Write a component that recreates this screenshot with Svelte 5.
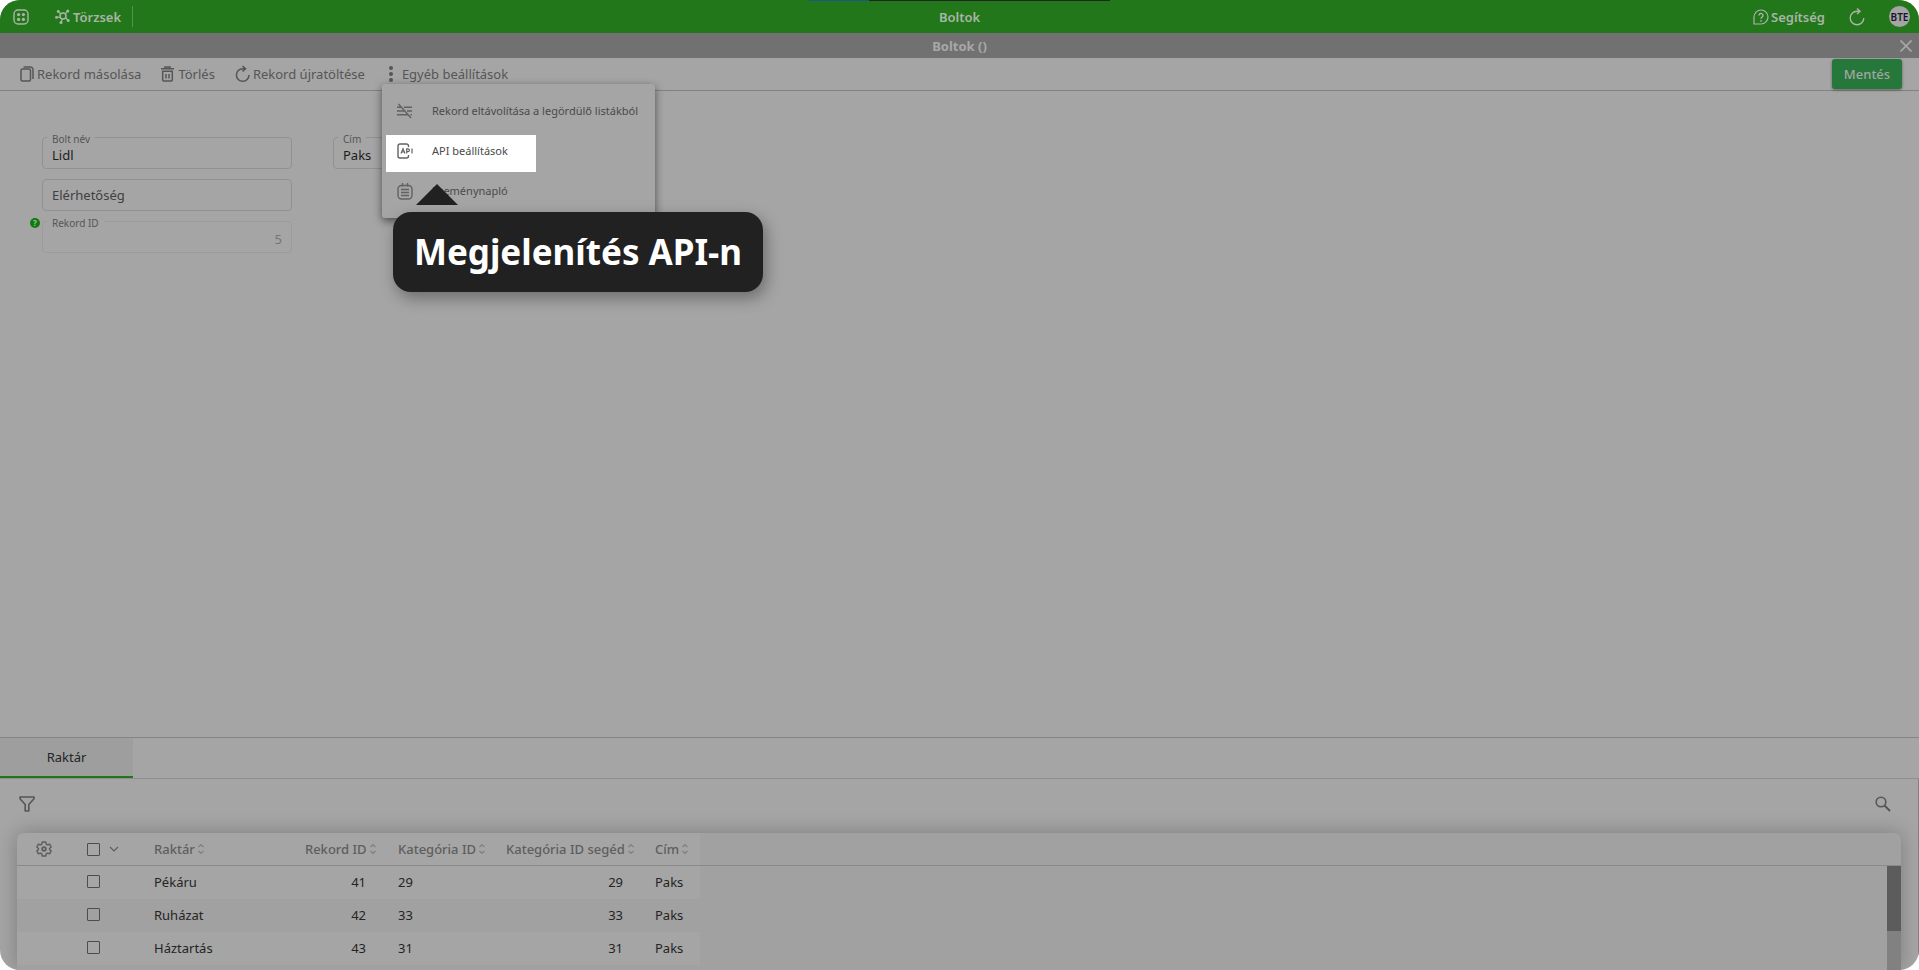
<script lang="ts">
  interface Row {
    name: string;
    id: number;
    category: number;
    helper: number;
    city: string;
  }

  const rows: Row[] = [
    { name: 'Pékáru', id: 41, category: 29, helper: 29, city: 'Paks' },
    { name: 'Ruházat', id: 42, category: 33, helper: 33, city: 'Paks' },
    { name: 'Háztartás', id: 43, category: 31, helper: 31, city: 'Paks' },
  ];

  const columns = [
    { label: 'Raktár', numeric: false },
    { label: 'Rekord ID', numeric: true },
    { label: 'Kategória ID', numeric: false },
    { label: 'Kategória ID segéd', numeric: true },
    { label: 'Cím', numeric: false },
  ];

  let shopName = $state('Lidl');
  let contact = $state('');
  let recordId = $state('5');
  let city = $state('Paks');
</script>

<div class="app">
  <header class="topbar">
    <span class="progress"></span>
    <div class="top-left">
      <button class="icon-btn" aria-label="Menü">
        <svg width="16" height="16" viewBox="0 0 16 16" fill="none" stroke="currentColor">
          <rect x="1" y="1" width="14" height="14" rx="4" stroke-width="1.4" />
          <g fill="currentColor" stroke="none">
            <circle cx="5.6" cy="5.6" r="1.6" /><circle cx="10.4" cy="5.6" r="1.6" />
            <circle cx="5.6" cy="10.4" r="1.6" /><circle cx="10.4" cy="10.4" r="1.6" />
          </g>
        </svg>
      </button>
      <button class="top-btn module">
        <svg width="15" height="15" viewBox="0 0 15 15" fill="none" stroke="currentColor" stroke-width="1.2">
          <circle cx="8" cy="7" r="3" stroke-width="1.5" />
          <path d="M5.8 4.8 3.4 2.6M10.2 4.8l2.4-2.6M5.2 8.1 1.5 8.4M7.2 10l-1 3.4M10.4 8.8l2.6 2.4" />
          <g fill="currentColor" stroke="none">
            <circle cx="3.2" cy="2.4" r="1.4" /><circle cx="12.8" cy="2" r="1.5" />
            <circle cx="1.5" cy="8.4" r="1.4" /><circle cx="6" cy="13.4" r="1.5" />
            <circle cx="13.2" cy="11.4" r="1.5" />
          </g>
        </svg>
        Törzsek
      </button>
    </div>
    <h1>Boltok</h1>
    <div class="top-right">
      <button class="top-btn help">
        <svg width="16" height="16" viewBox="0 0 16 16" fill="none" stroke="currentColor" stroke-width="1.2">
          <path d="M1 15V8a7 7 0 1 1 7 7z" />
          <path d="M6 6.4a2 2 0 1 1 3 1.8c-.8.4-1 .8-1 1.6" stroke-width="1.4" />
          <circle cx="8" cy="11.8" r=".9" fill="currentColor" stroke="none" />
        </svg>
        Segítség
      </button>
      <button class="icon-btn" aria-label="Frissítés">
        <svg width="16" height="18" viewBox="0 0 16 18" fill="none" stroke="currentColor" stroke-width="1.4">
          <path d="M14.8 10A6.800 6.800 0 1 1 8 3.200h2.500" />
          <path d="M8 .5l3 2.700L8 6" />
        </svg>
      </button>
      <button class="avatar">BTE</button>
    </div>
  </header>

  <div class="titlebar">
    <h2>Boltok ()</h2>
    <button class="icon-btn" aria-label="Bezárás">
      <svg width="12" height="12" viewBox="0 0 12 12" stroke="currentColor" stroke-width="1.6">
        <path d="M.5.5l11 11M11.5.5l-11 11" />
      </svg>
    </button>
  </div>

  <div class="toolbar">
    <button class="tool">
      <svg width="14" height="16" viewBox="0 0 14 16" fill="none" stroke="currentColor" stroke-width="1.5">
        <rect x="1" y="3" width="9.500" height="12" rx="1.500" />
        <path d="M3.500 1h7a2.500 2.500 0 0 1 2.500 2.500V13" />
      </svg>
      Rekord másolása
    </button>
    <button class="tool wide">
      <svg width="13" height="16" viewBox="0 0 13 16" fill="none" stroke="currentColor" stroke-width="1.5">
        <path d="M0 2.700h13M4 2V1h5v1M1.700 5.200V14a1 1 0 0 0 1 1h7.600a1 1 0 0 0 1-1V5.200z" />
        <path d="M5 8v4.500M8 8v4.500" />
      </svg>
      Törlés
    </button>
    <button class="tool">
      <svg width="15" height="18" viewBox="0 0 15 18" fill="none" stroke="currentColor" stroke-width="1.6">
        <path d="M14 10A6.300 6.300 0 1 1 7.700 3.700H10" />
        <path d="M7.500 1l3 2.700-3 2.600" />
      </svg>
      Rekord újratöltése
    </button>
    <button class="tool more">
      <svg width="4" height="16" viewBox="0 0 4 16" fill="currentColor">
        <circle cx="2" cy="2" r="2" /><circle cx="2" cy="8" r="2" /><circle cx="2" cy="14" r="2" />
      </svg>
      Egyéb beállítások
    </button>
    <button class="save">Mentés</button>

    <div class="menu">
      <span class="spotlight"></span>
      <button class="menu-item">
        <svg width="16" height="16" viewBox="0 0 16 16" fill="none" stroke="currentColor" stroke-width="1.4">
          <path d="M0 4.200h3.800M6.800 4.200H15M0 8h7M10 8h5M0 11.800h10.500M13.500 11.800H15M1.500 1L14 15" />
        </svg>
        Rekord eltávolítása a legördülő listákból
      </button>
      <button class="menu-item">
        <svg width="16" height="16" viewBox="0 0 16 16" fill="none" stroke="currentColor" stroke-width="1.4">
          <path d="M11.500 4V3a2 2 0 0 0-2-2H3a2 2 0 0 0-2 2v10a2 2 0 0 0 2 2h6.500a2 2 0 0 0 2-2v-1" />
          <path d="M4 10.500l2-4.800 2 4.800M4.800 9h2.400M9.700 10.500V5.900h1.300a1.400 1.400 0 0 1 0 2.800H9.700M15 5.500v5" stroke-width="1.200" />
        </svg>
        API beállítások
      </button>
      <button class="menu-item">
        <svg width="16" height="17" viewBox="0 0 16 17" fill="none" stroke="currentColor" stroke-width="1.4">
          <rect x="1" y="2.500" width="14" height="13.500" rx="3.500" />
          <path d="M4 6.500h8M4 9.500h8M4 12.500h8M5.500 0v3.500M10.500 0v3.500" />
        </svg>
        Eseménynapló
      </button>
      <div class="tip" role="tooltip">Megjelenítés API-n</div>
    </div>
  </div>

  <form class="form">
    <div class="column">
      <div class="field">
        <label for="shop">Bolt név</label>
        <input id="shop" bind:value={shopName} />
      </div>
      <div class="field empty">
        <input id="contact" aria-label="Elérhetőség" placeholder="Elérhetőség" bind:value={contact} />
      </div>
      <div class="field disabled">
        <span class="hint">?</span>
        <label for="record">Rekord ID</label>
        <input id="record" bind:value={recordId} disabled />
      </div>
    </div>
    <div class="column">
      <div class="field">
        <label for="city">Cím</label>
        <input id="city" bind:value={city} />
      </div>
    </div>
  </form>

  <section class="panel">
    <nav class="tabs">
      <button class="tab">Raktár</button>
    </nav>
    <div class="panel-body">
      <div class="filters">
        <button class="icon-btn" aria-label="Szűrő">
          <svg width="16" height="16" viewBox="0 0 16 16" fill="none" stroke="currentColor" stroke-width="1.6" stroke-linejoin="round">
            <path d="M1 1h14v1.800L9.800 8.500V15H6.200V8.500L1 2.800z" />
          </svg>
        </button>
        <button class="icon-btn" aria-label="Keresés">
          <svg width="16" height="16" viewBox="0 0 16 16" fill="none" stroke="currentColor" stroke-width="1.6">
            <circle cx="6" cy="6" r="4.800" />
            <path d="M9.500 9.500l5.500 5.500" stroke-width="2" />
          </svg>
        </button>
      </div>

      <div class="grid">
        <table>
          <colgroup>
            <col class="c-gear" />
            <col class="c-check" />
            <col class="c-name" />
            <col class="c-id" />
            <col class="c-cat" />
            <col class="c-helper" />
            <col class="c-city" />
            <col />
          </colgroup>
          <thead>
            <tr>
              <th class="gear">
                <button class="icon-btn" aria-label="Beállítások">
                  <svg width="16" height="16" viewBox="0 0 16 16" fill="none" stroke="currentColor" stroke-width="1.5" stroke-linejoin="round">
                    <path d="M6.300 1h3.400l.5 2.100 1.300.8 2.100-.7 1.500 2.800-1.500 1.500v1l1.500 1.500-1.500 2.800-2.100-.7-1.300.8L9.700 15H6.300l-.5-2.100-1.300-.8-2.100.7L.9 10l1.500-1.500v-1L.9 6l1.500-2.800 2.100.7 1.300-.8z" />
                    <circle cx="8" cy="8" r="1.800" stroke-width="1.800" />
                  </svg>
                </button>
              </th>
              <th class="check">
                <input type="checkbox" aria-label="Összes kijelölése" />
                <svg width="10" height="6" viewBox="0 0 10 6" fill="none" stroke="currentColor" stroke-width="1.200">
                  <path d="M1 1l4 4 4-4" />
                </svg>
              </th>
              {#each columns as col}
                <th class:numeric={col.numeric}>
                  {col.label}
                  <svg class="sort" width="6" height="10" viewBox="0 0 6 10" fill="none" stroke="currentColor" stroke-width="1.300">
                    <path d="M.5 3L3 .7 5.500 3M.5 7L3 9.300 5.500 7" />
                  </svg>
                </th>
              {/each}
              <th class="filler"></th>
            </tr>
          </thead>
          <tbody>
            {#each rows as row}
              <tr>
                <td></td>
                <td class="check"><input type="checkbox" aria-label={row.name} /></td>
                <td>{row.name}</td>
                <td class="numeric">{row.id}</td>
                <td>{row.category}</td>
                <td class="numeric">{row.helper}</td>
                <td>{row.city}</td>
                <td class="filler"></td>
              </tr>
            {/each}
          </tbody>
        </table>
        <div class="scrollbar"><span></span></div>
      </div>
    </div>
  </section>
</div>

<style>
  :global(body) {
    background: #fff;
  }

  .app {
    --surface: #a5a5a5;
    --green: #22771a;
    --icon: #565656;
    --line: #858585;
    display: flex;
    flex-direction: column;
    min-height: 100vh;
    overflow: hidden;
    border-radius: 20px;
    background: var(--surface);
    color: #242424;
    font-family: 'Noto Sans', 'Open Sans', sans-serif;
    font-size: 13px;
    line-height: 18px;
  }

  .app * {
    box-sizing: border-box;
  }

  button {
    display: flex;
    align-items: center;
    padding: 0;
    border: none;
    background: none;
    color: inherit;
    font: inherit;
    cursor: pointer;
  }

  h1,
  h2 {
    margin: 0;
    font-size: 13px;
    line-height: 18px;
    text-align: center;
  }

  h1 {
    font-weight: 600;
  }

  .topbar {
    position: relative;
    display: grid;
    grid-template-columns: 1fr auto 1fr;
    align-items: center;
    height: 33px;
    background: var(--green);
    color: #a9b5a8;
  }

  .progress {
    position: absolute;
    top: 0;
    left: 809px;
    width: 301px;
    height: 1px;
    background: linear-gradient(to right, #165a8c 60px, #242424 60px);
  }

  .top-left,
  .top-right {
    display: flex;
    align-items: center;
  }

  .top-left {
    gap: 26px;
    padding-left: 13px;
  }

  .top-right {
    justify-content: flex-end;
    gap: 24px;
    padding-right: 9px;
  }

  .top-btn {
    gap: 3px;
    font-weight: 600;
  }

  .module {
    height: 21px;
    padding-right: 11px;
    border-right: 1px solid #55924f;
  }

  .help {
    gap: 2px;
  }

  .avatar {
    justify-content: center;
    width: 21px;
    height: 21px;
    border-radius: 50%;
    background: #a5a5a5;
    color: #14142c;
    font-size: 10px;
    font-weight: 600;
  }

  .titlebar {
    display: grid;
    grid-template-columns: 1fr auto 1fr;
    align-items: center;
    height: 25px;
    padding: 0 7px;
    background: #717171;
    color: #a8a8a8;
  }

  .titlebar h2 {
    grid-column: 2;
  }

  .titlebar .icon-btn {
    justify-self: end;
  }

  .toolbar {
    position: relative;
    display: flex;
    align-items: center;
    gap: 20px;
    height: 33px;
    padding: 0 17px 0 20px;
    border-bottom: 1px solid #828282;
    color: var(--icon);
  }

  .tool {
    gap: 3px;
  }

  .wide {
    gap: 4px;
  }

  .more {
    gap: 9px;
    margin-left: 4px;
  }

  .save {
    justify-content: center;
    width: 70px;
    height: 30px;
    margin-left: auto;
    border-radius: 3px;
    background: #26783a;
    color: #a5a5a5;
    font-weight: 500;
    box-shadow: 0 1px 3px rgba(0, 0, 0, 0.4);
  }

  .menu {
    position: absolute;
    top: 26px;
    left: 382px;
    z-index: 1;
    width: 273px;
    padding: 7px 0;
    border-radius: 3px;
    background: var(--surface);
    box-shadow: 0 3px 9px rgba(0, 0, 0, 0.55);
  }

  .menu-item {
    position: relative;
    gap: 19px;
    width: 100%;
    height: 40px;
    padding-left: 15px;
    color: #4a4a4a;
    font-size: 11px;
    white-space: nowrap;
  }

  .menu-item svg {
    color: #626262;
  }

  .spotlight {
    position: absolute;
    top: 51px;
    left: 4px;
    width: 150px;
    height: 37px;
    background: #fff;
  }

  .tip {
    position: absolute;
    top: 128px;
    left: 11px;
    display: flex;
    align-items: center;
    justify-content: center;
    width: 370px;
    height: 80px;
    border-radius: 18px;
    background: #212121;
    color: #fff;
    font-size: 35px;
    font-weight: 700;
    white-space: nowrap;
    box-shadow: 3px 6px 16px rgba(0, 0, 0, 0.35);
  }

  .tip::before {
    content: '';
    position: absolute;
    top: -28px;
    left: 23px;
    border: solid transparent;
    border-width: 0 21px 21px;
    border-bottom-color: #212121;
  }

  .form {
    display: flex;
    flex: 1;
    gap: 41px;
    padding: 46px 42px;
  }

  .column {
    display: flex;
    flex-direction: column;
    gap: 10px;
    width: 250px;
  }

  .field {
    position: relative;
  }

  .field input {
    display: block;
    width: 100%;
    height: 32px;
    padding: 4px 9px 0;
    border: 1px solid #919191;
    border-radius: 4px;
    background: transparent;
    color: #1c1c1c;
    font: inherit;
  }

  .field input::placeholder {
    color: #404040;
    opacity: 1;
  }

  .empty input {
    padding-top: 0;
  }

  .field label {
    position: absolute;
    top: -5px;
    left: 5px;
    padding: 0 5px;
    background: var(--surface);
    color: #555;
    font-size: 10px;
    line-height: 14px;
  }

  .disabled input {
    border-color: #9b9b9b;
    color: #757575;
    text-align: right;
  }

  .hint {
    position: absolute;
    top: -3px;
    left: -12px;
    width: 10px;
    height: 10px;
    border-radius: 50%;
    background: #107a10;
    color: #a5c0a2;
    font-size: 8px;
    font-weight: 700;
    line-height: 10px;
    text-align: center;
  }

  .tabs {
    display: flex;
    height: 42px;
    border-top: 1px solid var(--line);
    border-bottom: 1px solid #8e8e8e;
  }

  .tab {
    justify-content: center;
    width: 133px;
    border-bottom: 2px solid var(--green);
    background: #9e9e9e;
  }

  .panel-body {
    padding: 0 17px;
    border-right: 1px solid #808080;
  }

  .filters {
    display: flex;
    align-items: center;
    justify-content: space-between;
    height: 54px;
    padding: 0 10px 4px 2px;
    color: var(--icon);
  }

  .grid {
    position: relative;
    padding-bottom: 5px;
    border-radius: 7px 7px 0 0;
    background: #a1a1a1;
    box-shadow: 0 0 20px rgba(0, 0, 0, 0.25);
  }

  table {
    width: 100%;
    table-layout: fixed;
    border-spacing: 0;
  }

  .c-gear {
    width: 54px;
  }

  .c-check {
    width: 74px;
  }

  .c-name {
    width: 145px;
  }

  .c-id {
    width: 99px;
  }

  .c-cat {
    width: 108px;
  }

  .c-helper {
    width: 149px;
  }

  .c-city {
    width: 54px;
  }

  th,
  td {
    height: 33px;
    padding: 0 0 0 9px;
    background: var(--surface);
    text-align: left;
    white-space: nowrap;
  }

  td {
    padding-bottom: 2px;
  }

  th {
    border-bottom: 1px solid #8a8a8a;
    color: #5e5e5e;
    font-weight: 500;
  }

  th:first-child {
    border-top-left-radius: 7px;
  }

  tbody tr:nth-child(even) td,
  th.filler,
  tbody td.filler {
    background: #a1a1a1;
  }

  th.filler {
    border-top-right-radius: 7px;
  }

  td.numeric {
    padding-right: 23px;
    text-align: right;
  }

  th.numeric {
    padding-right: 13px;
    text-align: right;
  }

  .gear {
    padding-left: 19px;
  }

  .check {
    padding-left: 16px;
    line-height: 13px;
  }

  .check input {
    appearance: none;
    width: 13px;
    height: 13px;
    margin: 0;
    border: 1px solid #4c4c4c;
    border-radius: 1px;
    vertical-align: top;
  }

  .check svg {
    margin: 3px 0 0 6px;
    vertical-align: top;
  }

  .sort {
    color: #808080;
  }

  .scrollbar {
    position: absolute;
    top: 33px;
    right: 0;
    bottom: 0;
    width: 14px;
    background: #818181;
  }

  .scrollbar span {
    display: block;
    height: 65px;
    background: #5c5c5c;
  }
</style>
